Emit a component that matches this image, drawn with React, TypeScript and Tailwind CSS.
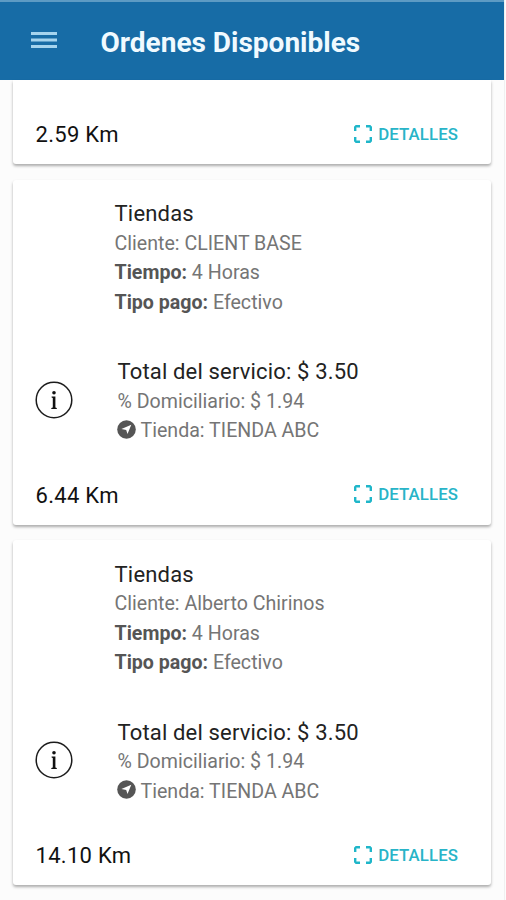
interface Order {
  distance: string;
  client: string;
  time: string;
  payment: string;
  total: string;
  share: string;
  store: string;
}

const orders: Order[] = [
  {
    distance: '6.44 Km',
    client: 'CLIENT BASE',
    time: '4 Horas',
    payment: 'Efectivo',
    total: '$ 3.50',
    share: '$ 1.94',
    store: 'TIENDA ABC',
  },
  {
    distance: '14.10 Km',
    client: 'Alberto Chirinos',
    time: '4 Horas',
    payment: 'Efectivo',
    total: '$ 3.50',
    share: '$ 1.94',
    store: 'TIENDA ABC',
  },
];

function MenuIcon() {
  return (
    <svg className="mb-0.5 h-4 w-[26px]" viewBox="0 0 26 16" fill="#a5d4ee">
      <rect y="0" width="26" height="3" />
      <rect y="6.5" width="26" height="3" />
      <rect y="13" width="26" height="3" />
    </svg>
  );
}

function ScanIcon() {
  return (
    <svg className="h-[18px] w-[18px]" viewBox="0 0 18 18" fill="none" stroke="#1fb6c9" strokeWidth="2.4">
      <path d="M1.2 6V2.2L2.2 1.2H6M12 1.2h3.8l1 1V6M16.8 12v3.8l-1 1H12M6 16.8H2.2l-1-1V12" />
    </svg>
  );
}

function InfoIcon() {
  return (
    <svg className="h-[38px] w-[38px]" viewBox="0 0 38 38">
      <circle cx="19" cy="19" r="17.8" fill="none" stroke="#1c1c1c" strokeWidth="1.5" />
      <circle cx="19" cy="11.8" r="1.8" fill="#111" />
      <path d="M16.6 15.6h3.8v10.9l1.4.6v.9h-5.5v-.9l1.5-.6v-9.4l-1.2-.6z" fill="#111" />
    </svg>
  );
}

function CompassIcon() {
  return (
    <svg className="mb-[3px] h-[19px] w-[19px]" viewBox="0 0 19 19">
      <circle cx="9.5" cy="9.5" r="9.3" fill="#555" />
      <path d="M14.3 4.7L10.5 14 9.2 9.9 4.4 9z" fill="#fff" />
    </svg>
  );
}

function CardFooter({ distance }: { distance: string }) {
  return (
    <div className="flex items-start justify-between pr-[33px] pl-[23px]">
      <span className="pt-[1.5px] text-[22px] leading-[30px] tracking-[0.3px] text-[#111]">{distance}</span>
      <button className="flex items-center gap-1.5 text-[16.8px] leading-[30px] font-medium tracking-[0.1px] text-[#28b4c8]">
        <ScanIcon />
        DETALLES
      </button>
    </div>
  );
}

function OrderCard({ order }: { order: Order }) {
  return (
    <article className="flex h-[345px] flex-col rounded-[3px] bg-white pt-[19.5px] shadow-[0_2px_3px_rgba(0,0,0,0.32)]">
      <div className="pl-[102px] text-[19.6px] leading-[29.5px] text-[#757575]">
        <h2 className="text-[22px] tracking-[0.2px] text-[#222]">Tiendas</h2>
        <p>Cliente: {order.client}</p>
        <p>
          <b className="text-[#555]">Tiempo:</b> {order.time}
        </p>
        <p>
          <b className="text-[#555]">Tipo pago:</b> {order.payment}
        </p>
      </div>
      <div className="mt-10 flex items-center pl-[22px]">
        <div className="pb-[3px]">
          <InfoIcon />
        </div>
        <div className="ml-[45px] text-[19.6px] leading-[29.5px] text-[#757575]">
          <h2 className="text-[22px] tracking-[0.16px] text-[#222]">Total del servicio: {order.total}</h2>
          <p>% Domiciliario: {order.share}</p>
          <p className="-ml-px flex items-center gap-[5px]">
            <CompassIcon />
            Tienda: {order.store}
          </p>
        </div>
      </div>
      <div className="mt-[33.5px]">
        <CardFooter distance={order.distance} />
      </div>
    </article>
  );
}

export default function App() {
  return (
    <div className="h-[900px] w-[506px] overflow-hidden bg-[#fcfcfc] font-[Roboto,sans-serif]">
      <div className="h-full w-[505px] border-r border-[#f0f0f0]">
        <header className="flex h-20 items-center border-t-2 border-[#5d9bc4] bg-[#176ca6] pl-[31px]">
          <MenuIcon />
          <h1 className="ml-[43.5px] pt-[3px] text-[28px] font-bold text-[#f0faff]">Ordenes Disponibles</h1>
        </header>
        <main className="flex flex-col gap-[15.5px] pr-[13px] pl-[12.5px]">
          <article className="h-[84px] rounded-b-[3px] bg-white pt-[38.5px] shadow-[0_2px_3px_rgba(0,0,0,0.32)]">
            <CardFooter distance="2.59 Km" />
          </article>
          {orders.map((order) => (
            <OrderCard key={order.distance} order={order} />
          ))}
        </main>
      </div>
    </div>
  );
}
